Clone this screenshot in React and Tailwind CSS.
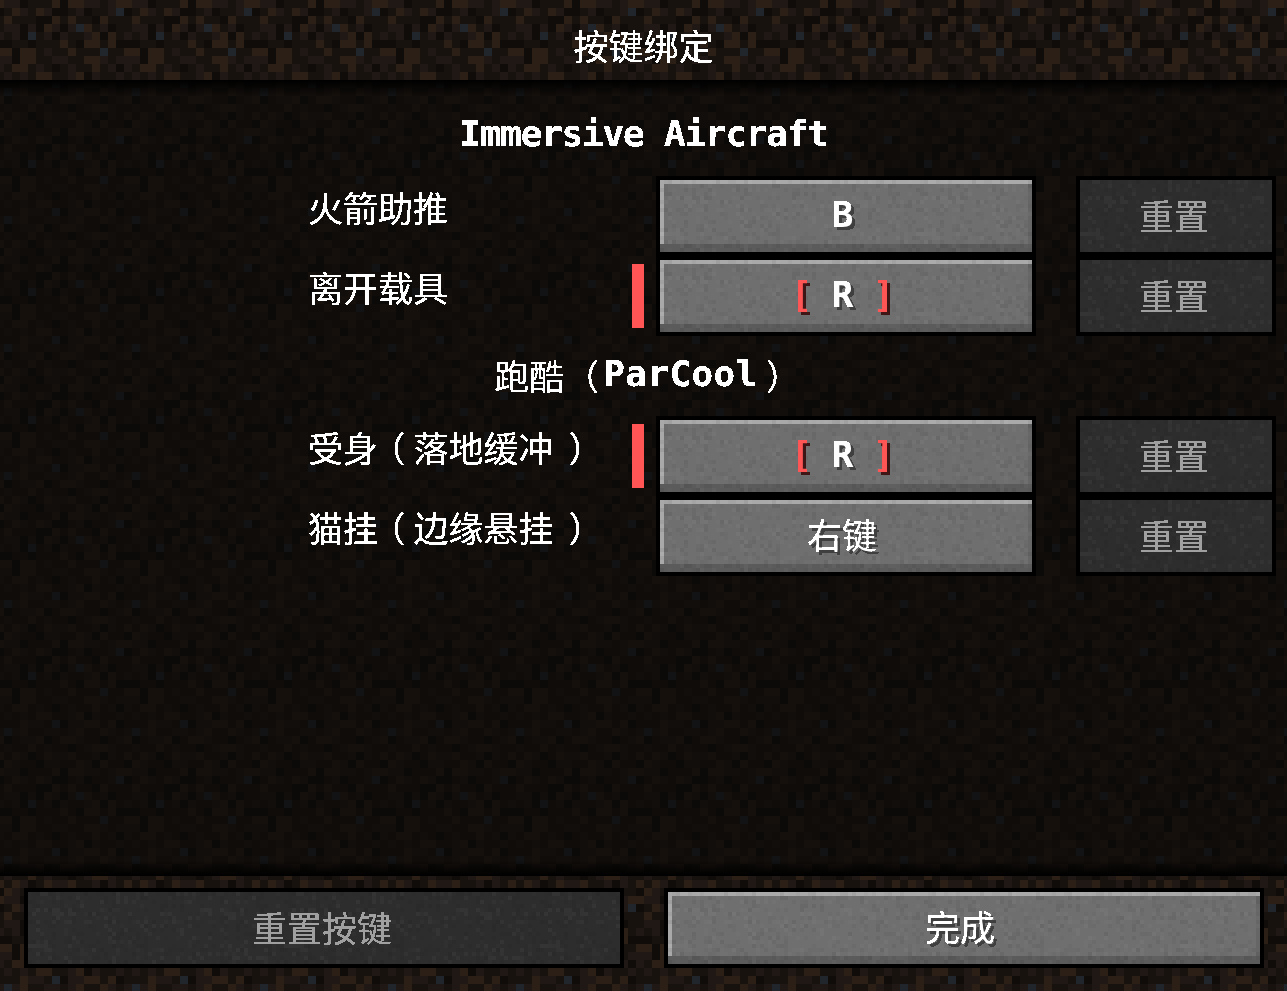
import React from 'react';

const CJK = '"Noto Sans CJK SC", "Noto Sans", sans-serif';
const MONO = '"DejaVu Sans Mono", monospace';

// dirt tile, 16x16, one digit per texel
const DIRT_ROWS = [
  '2201113033221233',
  '1321320012011290',
  '3111003131103111',
  '2202032029312011',
  '1209120211230312',
  '0110111310331300',
  '3033121131119113',
  '2033112211332122',
  '1331210121131202',
  '2121331123021121',
  '1132219022331301',
  '9231122123113212',
  '0122301332110123',
  '2113121101233211',
  '1320132231120213',
  '3211022113203110',
];
const DIRT_COLORS = { 0: '#100c0a', 1: '#18120e', 2: '#201814', 3: '#2b1f16', 9: '#20262c' };

// small seeded noise so the stone looks the same on every run
function makeStone() {
  const out = [];
  let seed = 12345;
  for (let y = 0; y < 24; y++) {
    for (let x = 0; x < 64; x++) {
      seed = (seed * 1103515245 + 12345) & 0x7fffffff;
      const v = (seed >> 12) % 100;
      if (v < 22) out.push({ x, y, c: '#000000', o: 0.03 + (v % 5) * 0.008 });
      else if (v < 40) out.push({ x, y, c: '#ffffff', o: 0.012 + (v % 5) * 0.005 });
    }
  }
  return out;
}
const STONE = makeStone();

function Defs() {
  return (
    <svg className="absolute h-0 w-0" aria-hidden="true">
      <defs>
        <pattern id="dirt" x="4" y="0" width="128" height="128" patternUnits="userSpaceOnUse">
          {DIRT_ROWS.map((row, y) =>
            row.split('').map((d, x) => (
              <rect key={x + '-' + y} x={x * 8} y={y * 8} width="8" height="8" fill={DIRT_COLORS[d]} />
            ))
          )}
        </pattern>
        <pattern id="stone" width="256" height="96" patternUnits="userSpaceOnUse">
          {STONE.map((s, i) => (
            <rect key={i} x={s.x * 4} y={s.y * 4} width="4" height="4" fill={s.c} opacity={s.o} />
          ))}
        </pattern>
        <filter id="crisp" x="0" y="0" width="100%" height="100%" colorInterpolationFilters="sRGB">
          <feComponentTransfer>
            <feFuncA type="discrete" tableValues="0 1 1" />
          </feComponentTransfer>
        </filter>
      </defs>
    </svg>
  );
}

function Noise() {
  return (
    <svg className="absolute inset-0 h-full w-full" aria-hidden="true">
      <rect width="100%" height="100%" fill="url(#stone)" />
    </svg>
  );
}

function Latin({ children, wide = false }) {
  return (
    <span
      className={wide ? 'ml-1 text-[36px] font-bold tracking-[0.4px]' : 'text-[36px] font-bold tracking-[-1.2px]'}
      style={{ fontFamily: MONO }}
    >
      {children}
    </span>
  );
}

function McButton({ children, className = '', disabled = false }) {
  return (
    <div className={`shrink-0 border-4 border-black ${className}`}>
      <div
        className={
          disabled
            ? 'relative flex h-full items-center justify-center bg-[#2d2d2d] pb-1 pr-1'
            : 'relative flex h-full items-center justify-center bg-[#6f6f6f] pb-1.5 pr-2 shadow-[inset_0_-8px_0_#5b5b5b,inset_4px_4px_0_#a9a9a9,inset_-4px_0_0_#666666]'
        }
      >
        <Noise />
        <span
          className={
            disabled
              ? 'relative text-[35px] leading-none text-[#a0a0a0] [filter:url(#crisp)]'
              : 'relative text-[35px] leading-none text-white [filter:url(#crisp)] [text-shadow:3px_3px_0_#3f3f3f]'
          }
        >
          {children}
        </span>
      </div>
    </div>
  );
}

// half-width paren glyphs, placed with margins so they sit apart from the neighbours
function Paren({ side }) {
  return side === 'open' ? (
    <span className="ml-2.5 mr-2 [font-feature-settings:'halt']">（</span>
  ) : (
    <span className="ml-[15px] [font-feature-settings:'halt']">）</span>
  );
}

function KeyRow({ label, note, keyName, conflict }) {
  return (
    <div className="flex h-20 items-center pl-[308px]">
      <div className="w-[324px] pb-5 text-[35px] leading-none text-white [filter:url(#crisp)]">
        {label}
        {note && (
          <>
            <Paren side="open" />
            {note}
            <Paren side="close" />
          </>
        )}
      </div>
      <div className={conflict ? 'h-16 w-3 bg-[#ff5555]' : 'h-16 w-3'} />
      <McButton className="ml-3 h-20 w-[380px]">
        {conflict ? (
          <Latin>
            <span className="text-[#ff5555] [text-shadow:3px_3px_0_#3f1515]">[ </span>
            {keyName}
            <span className="text-[#ff5555] [text-shadow:3px_3px_0_#3f1515]"> ]</span>
          </Latin>
        ) : (
          keyName
        )}
      </McButton>
      <McButton className="ml-10 h-20 w-[200px]" disabled>
        重置
      </McButton>
    </div>
  );
}

function Section({ children, className = '' }) {
  return (
    <div className={`flex h-20 items-center justify-center pb-1 text-[35px] leading-none text-white [filter:url(#crisp)] ${className}`}>
      {children}
    </div>
  );
}

export default function App() {
  return (
    <div className="relative flex h-screen flex-col overflow-hidden bg-[#1c1410]" style={{ fontFamily: CJK }}>
      <Defs />
      <svg className="absolute inset-0 h-full w-full" aria-hidden="true">
        <rect width="100%" height="100%" fill="url(#dirt)" />
      </svg>

      <header className="relative flex h-20 shrink-0 items-center justify-center pt-2 text-[35px] leading-none text-white [filter:url(#crisp)]">
        按键绑定
      </header>

      <main className="relative flex-1 bg-[#0b0908]/65 pt-4">
        <div className="absolute inset-x-0 top-0 h-4 bg-gradient-to-b from-black to-transparent" />
        <div className="absolute inset-x-0 bottom-0 h-4 bg-gradient-to-t from-black to-transparent" />
        <div className="relative">
          <Section>
            <Latin>Immersive Aircraft</Latin>
          </Section>
          <KeyRow label="火箭助推" keyName={<Latin>B</Latin>} />
          <KeyRow label="离开载具" keyName="R" conflict />
          <Section className="pl-2">
            跑酷（<Latin wide>ParCool</Latin>
            <span className="ml-2">）</span>
          </Section>
          <KeyRow label="受身" note="落地缓冲" keyName="R" conflict />
          <KeyRow label="猫挂" note="边缘悬挂" keyName="右键" />
        </div>
      </main>

      <footer className="relative flex h-[115px] shrink-0 gap-10 pl-6 pt-3">
        <McButton className="h-20 w-[600px]" disabled>
          重置按键
        </McButton>
        <McButton className="h-20 w-[600px]">完成</McButton>
      </footer>
    </div>
  );
}
